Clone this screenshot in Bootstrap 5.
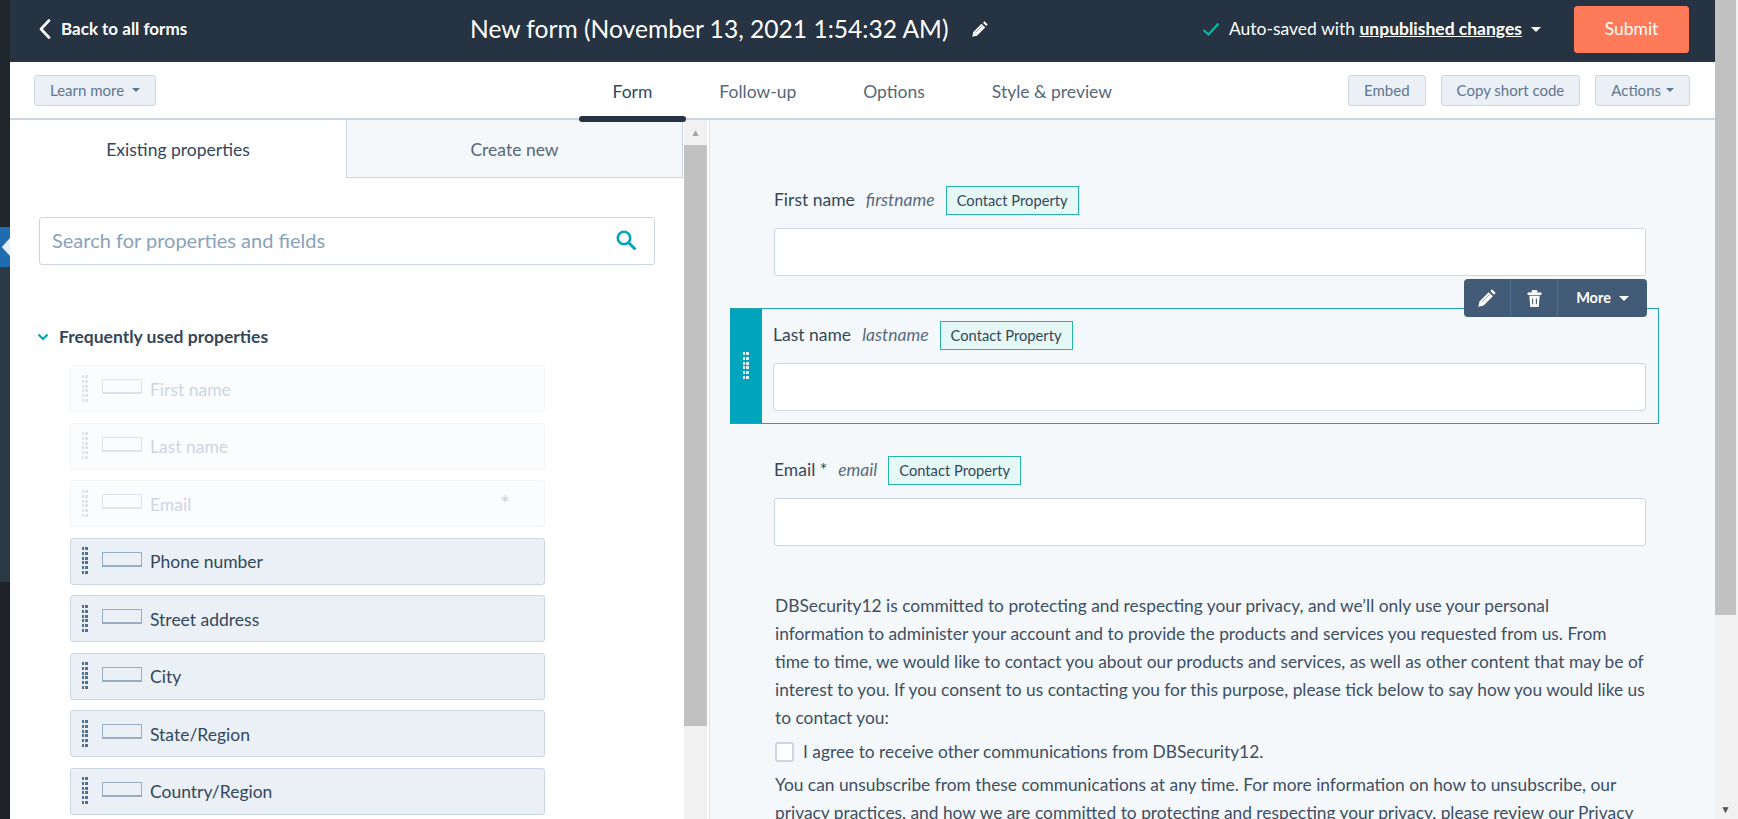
<!doctype html>
<html lang="en">
<head>
  <meta charset="utf-8">
  <meta name="viewport" content="width=device-width, initial-scale=1">
  <title>New form</title>
  <link href="https://cdn.jsdelivr.net/npm/bootstrap@5.3.0/dist/css/bootstrap.min.css" rel="stylesheet">
  <style>
    html, body { height: 100%; overflow: hidden; }
    body { font-family: Lato, "Open Sans", sans-serif; color: #33475b; background: #fff; font-size: 17.5px; }
    .page-shell { width: 1738px; height: 819px; }
    .side-strip { width: 10px; background: #1f2a33; }
    .side-top { height: 227px; background: #20272c; }
    .side-tab { height: 40px; background: #1f6db0; }
    .side-mid { height: 315px; background: #2c3a45; }
    .side-low { flex: 1; background: #1c2227; }
    .main-area { width: 1705px; }
    .top-head { height: 62px; background: #253342; color: #fff; padding: 0 26px 4px 29px; }
    .back-link { width: 431px; font-weight: 700; font-size: 17px; gap: 10px; color: #fff; text-decoration: none; }
    .form-title { font-size: 24.6px; font-weight: 400; margin: 0; gap: 23px; }
    .save-state { font-size: 17.5px; margin-left: auto; margin-right: 33px; gap: 9px; }
    .save-state b { text-decoration: underline; }
    .caret-down { display: inline-block; border: 5px solid transparent; border-top-color: currentColor; border-bottom: 0; }
    .btn-submit { background: #ff7a59; border: 1px solid #ff7a59; color: #fff; width: 115px; height: 47px; font-size: 17.5px; border-radius: 3px; }
    .sub-nav { height: 58px; border-bottom: 2px solid #cbd6e2; padding: 0 25px 0 24px; }
    .learn-slot { width: 545px; }
    .btn-soft { background: #eaf0f6; border: 1px solid #cbd6e2; color: #5f7590; font-size: 15px; height: 31px; padding: 0 15px; border-radius: 3px; gap: 8px; }
    .btn-soft .caret-down { border-width: 4px 4px 0; }
    .btn-soft.tight-caret { gap: 5px; }
    .sub-tabs { align-self: stretch; }
    .sub-tab { position: relative; padding: 4px 33.5px 0; font-size: 17.5px; color: #55677a; }
    .sub-tab.is-on { color: #33475b; }
    .sub-tab.is-on::after { content: ""; position: absolute; left: 0; right: 0; bottom: -4px; height: 6px; background: #253342; border-radius: 3px; }
    .right-tools { gap: 15px; }
    .content-row { height: 699px; }
    .left-panel { width: 674px; overflow: hidden; }
    .panel-tab { height: 58px; font-size: 17.5px; width: 336px; padding-top: 3px; }
    .panel-tab.is-off { width: 337px; background: #f5f8fa; border: 1px solid #cbd6e2; border-top: 0; color: #55677a; }
    .search-box { margin: 39px 29px 0 29px; height: 48px; border: 1px solid #cbd6e2; border-radius: 3px; font-size: 20px; color: #8aa2ba; padding: 0 18px 2px 12px; }
    .section-title { margin: 59px 0 15px 27px; font-weight: 700; font-size: 17.5px; gap: 10px; }
    .prop-list { margin-left: 60px; width: 475px; gap: 10.5px; }
    .prop-item { height: 47px; background: #eaf0f6; border: 1px solid #cbd6e2; border-radius: 3px; color: #33475b; padding: 2px 0 0 11px; }
    .prop-item.is-used { background: #fbfcfd; border-color: #f2f5f8; color: #cbd6e2; }
    .grip { width: 6px; height: 28px; margin-right: 14px; margin-top: -2px; background: repeating-linear-gradient(180deg, #516f90 0 3px, transparent 3px 4.8px); -webkit-mask: linear-gradient(90deg, #000 0 2.5px, transparent 2.5px 3.5px, #000 3.5px); }
    .is-used .grip { background: repeating-linear-gradient(180deg, #dfe3eb 0 3px, transparent 3px 4.8px); }
    .field-shape { width: 40px; height: 15px; border: 1px solid #99acc2; border-bottom-width: 2px; margin-right: 8px; margin-top: -6px; }
    .is-used .field-shape { border-color: #dfe3eb; }
    .used-star { margin-left: auto; margin-right: 34px; font-size: 24px; line-height: 1; margin-top: -4px; }
    .fake-scroll { width: 23px; background: #f1f1f1; }
    .scroll-arrow { height: 25px; color: #a3a3a3; font-size: 10px; }
    .scroll-thumb { background: #c1c1c1; }
    .left-scroll .scroll-thumb { height: 581px; }
    .form-panel { flex: 1; background: #f5f8fa; border-left: 1px solid #dfe3eb; margin-left: 2px; padding-top: 66px; overflow: hidden; }
    .form-field { margin: 0 69px 0 64px; }
    .field-label { gap: 11px; height: 29px; margin-bottom: 13px; }
    .field-label i { color: #566b80; }
    .prop-tag { background: #e5f8f6; border: 1px solid #26b4a4; color: #33475b; font-size: 14.7px; padding: 0 10px; height: 29px; }
    .field-picked { margin: 32px 56px 0 20px; border: 1px solid #1fa5b0; border-left: 0; height: 116px; position: relative; }
    .field-input { height: 48px; background: #fff; border: 1px solid #cbd6e2; border-radius: 3px; }
    .picked-handle { width: 32px; background: #00a4bd; }
    .picked-handle .grip { margin: 0; background: repeating-linear-gradient(180deg, #dff4f7 0 3px, transparent 3px 4.8px); }
    .picked-body { padding: 12px 12px 0 11px; }
    .tool-pop { position: absolute; right: 11px; top: -30px; width: 183px; height: 38px; background: #425b76; border-radius: 4px; color: #fff; font-size: 14.5px; font-weight: 700; }
    .tool-cell { border-right: 1px solid #516f90; height: 100%; width: 47px; }
    .email-field { margin-top: 32px; }
    .legal-text { margin: 46px 69px 0 65px; line-height: 28px; font-size: 17.35px; color: #3c4f63; width: 880px; }
    .agree-row { gap: 9px; height: 34px; margin: 3px 0 2px; }
    .agree-box { width: 19px; height: 20px; background: #fff; border: 2px solid #cbd6e2; border-radius: 3px; }
    .right-scroll .scroll-thumb { height: 615px; width: 21px; }
    .right-scroll .scroll-arrow { height: 20px; color: #505050; padding-right: 2px; }
  </style>
</head>
<body>
<div class="page-shell d-flex">
  <div class="side-strip d-flex flex-column">
    <div class="side-top"></div>
    <div class="side-tab d-flex align-items-center justify-content-center">
      <svg width="9" height="18" viewBox="0 0 9 18"><path d="M9 0 .8 9 9 18z" fill="#e8eef5"/></svg>
    </div>
    <div class="side-mid"></div>
    <div class="side-low"></div>
  </div>

  <div class="main-area d-flex flex-column">
    <div class="top-head d-flex align-items-center">
      <a class="back-link d-flex align-items-center" href="#">
        <svg width="12" height="20" viewBox="0 0 12 20"><path d="M10 1.500 2 10l8 8.500" fill="none" stroke="#fff" stroke-width="2.600" stroke-linecap="round" stroke-linejoin="round"/></svg>
        Back to all forms
      </a>
      <h1 class="form-title d-flex align-items-center">
        <span>New form (November 13, 2021 1:54:32 AM)</span>
        <svg width="16" height="16" viewBox="0 0 16 16"><path d="M12.500.3 15.700 3.500 14.200 5 11 1.800zM9.500 2.800l3.700 3.700L5 14.700.3 15.700 1.300 11z" fill="#fff"/><path d="M3.500 11.500 10.500 4.500" stroke="#253342" stroke-width=".5"/></svg>
      </h1>
      <div class="save-state d-flex align-items-center">
        <svg width="18" height="14" viewBox="0 0 18 14"><path d="M1.500 8 6.500 12.500 16.500 1.500" fill="none" stroke="#00bda5" stroke-width="2.200"/></svg>
        <span>Auto-saved with <b>unpublished changes</b></span>
        <span class="caret-down"></span>
      </div>
      <button class="btn btn-submit p-0" type="button">Submit</button>
    </div>

    <div class="sub-nav d-flex align-items-center">
      <div class="learn-slot">
        <button class="btn btn-soft d-inline-flex align-items-center" type="button">Learn more <span class="caret-down"></span></button>
      </div>
      <nav class="nav sub-tabs">
        <a class="nav-link sub-tab is-on d-flex align-items-center" href="#">Form</a>
        <a class="nav-link sub-tab d-flex align-items-center" href="#">Follow-up</a>
        <a class="nav-link sub-tab d-flex align-items-center" href="#">Options</a>
        <a class="nav-link sub-tab d-flex align-items-center" href="#">Style &amp; preview</a>
      </nav>
      <div class="ms-auto d-flex align-items-center right-tools">
        <button class="btn btn-soft d-inline-flex align-items-center" type="button">Embed</button>
        <button class="btn btn-soft d-inline-flex align-items-center" type="button">Copy short code</button>
        <button class="btn btn-soft tight-caret d-inline-flex align-items-center" type="button">Actions <span class="caret-down"></span></button>
      </div>
    </div>

    <div class="content-row d-flex">
      <div class="left-panel">
        <div class="d-flex">
          <div class="panel-tab d-flex align-items-center justify-content-center">Existing properties</div>
          <div class="panel-tab is-off d-flex align-items-center justify-content-center">Create new</div>
        </div>
        <div class="search-box d-flex align-items-center justify-content-between">
          <span>Search for properties and fields</span>
          <svg width="20" height="20" viewBox="0 0 20 20"><circle cx="8" cy="8" r="6.200" fill="none" stroke="#00a4bd" stroke-width="2.600"/><path d="m13 13 5.500 5.500" stroke="#00a4bd" stroke-width="3" stroke-linecap="round"/></svg>
        </div>
        <div class="section-title d-flex align-items-center">
          <svg width="12" height="8" viewBox="0 0 12 8"><path d="m1.500 1.500 4.500 4.500 4.500-4.500" fill="none" stroke="#00a4bd" stroke-width="2.200"/></svg>
          Frequently used properties
        </div>
        <div class="prop-list d-flex flex-column" id="propList"></div>
      </div>
      <div class="fake-scroll left-scroll d-flex flex-column">
        <div class="scroll-arrow d-flex align-items-center justify-content-center">&#9650;</div>
        <div class="scroll-thumb"></div>
      </div>

      <div class="form-panel">
        <div class="form-field">
          <div class="field-label d-flex align-items-center">
            <span>First name</span><i>firstname</i>
            <span class="prop-tag d-inline-flex align-items-center">Contact Property</span>
          </div>
          <div class="field-input"></div>
        </div>

        <div class="field-picked d-flex">
          <div class="picked-handle d-flex align-items-center justify-content-center"><span class="grip"></span></div>
          <div class="picked-body flex-grow-1">
            <div class="field-label d-flex align-items-center">
              <span>Last name</span><i>lastname</i>
              <span class="prop-tag d-inline-flex align-items-center">Contact Property</span>
            </div>
            <div class="field-input"></div>
          </div>
          <div class="tool-pop d-flex align-items-center">
            <div class="tool-cell d-flex align-items-center justify-content-center">
              <svg width="18" height="18" viewBox="0 0 16 16"><path d="M12.500.3 15.700 3.500 14.200 5 11 1.800zM9.500 2.800l3.700 3.700L5 14.700.3 15.700 1.300 11z" fill="#fff"/><path d="M3.500 11.500 10.500 4.500" stroke="#425b76" stroke-width=".5"/></svg>
            </div>
            <div class="tool-cell d-flex align-items-center justify-content-center">
              <svg width="15" height="19" viewBox="0 0 16 20"><path d="M1 4h14v1.800H1zM5.500 4V1.500h5V4" fill="#fff" stroke="#fff"/><path d="M2.500 7h11l-1 12h-9z" fill="#fff"/><path d="M6 10v6M10 10v6" stroke="#425b76" stroke-width="1.200"/></svg>
            </div>
            <div class="flex-grow-1 d-flex align-items-center justify-content-center gap-2">More <span class="caret-down"></span></div>
          </div>
        </div>

        <div class="form-field email-field">
          <div class="field-label d-flex align-items-center">
            <span>Email *</span><i>email</i>
            <span class="prop-tag d-inline-flex align-items-center">Contact Property</span>
          </div>
          <div class="field-input"></div>
        </div>

        <div class="legal-text">
          <div>DBSecurity12 is committed to protecting and respecting your privacy, and we’ll only use your personal<br>information to administer your account and to provide the products and services you requested from us. From<br>time to time, we would like to contact you about our products and services, as well as other content that may be of<br>interest to you. If you consent to us contacting you for this purpose, please tick below to say how you would like us<br>to contact you:</div>
          <div class="agree-row d-flex align-items-center"><span class="agree-box"></span><span>I agree to receive other communications from DBSecurity12.</span></div>
          <div class="text-nowrap">You can unsubscribe from these communications at any time. For more information on how to unsubscribe, our<br>privacy practices, and how we are committed to protecting and respecting your privacy, please review our Privacy</div>
        </div>
      </div>
    </div>
  </div>

  <div class="fake-scroll right-scroll d-flex flex-column">
    <div class="scroll-thumb"></div>
    <div class="flex-grow-1"></div>
    <div class="scroll-arrow d-flex align-items-center justify-content-center">&#9660;</div>
  </div>
</div>
<script>
  const PROPS = [
    {label:'First name', used:true},
    {label:'Last name', used:true},
    {label:'Email', used:true, star:true},
    {label:'Phone number'},
    {label:'Street address'},
    {label:'City'},
    {label:'State/Region'},
    {label:'Country/Region'}
  ];
  document.getElementById('propList').innerHTML = PROPS.map(p => `
    <div class="prop-item d-flex align-items-center flex-shrink-0 ${p.used ? 'is-used' : ''}">
      <span class="grip"></span><span class="field-shape"></span><span>${p.label}</span>
      ${p.star ? '<span class="used-star">*</span>' : ''}
    </div>`).join('');
</script>
</body>
</html>
